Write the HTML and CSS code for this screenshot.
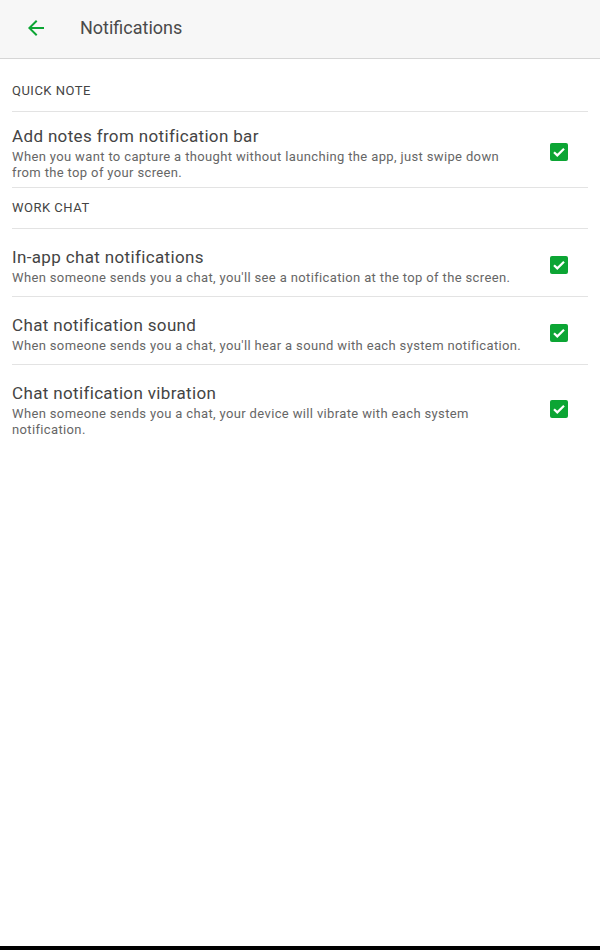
FILE: index.html
```html
<!DOCTYPE html>
<html lang="en">
<head>
<meta charset="utf-8">
<title>Notifications</title>
<link rel="stylesheet" href="styles.css">
</head>
<body>
<div class="screen">
  <header class="appbar">
    <button class="back" aria-label="Back">
      <svg viewBox="0 0 24 24" width="24" height="24"><path d="M20 11H7.83l5.59-5.59L12 4l-8 8 8 8 1.41-1.41L7.83 13H20v-2z" fill="#0ca534"/></svg>
    </button>
    <h1 class="appbar-title">Notifications</h1>
  </header>

  <main class="settings">
    <section class="group">
      <h2 class="group-title">QUICK NOTE</h2>
      <ul class="prefs">
        <li class="pref pref--first">
          <div class="pref-text">
            <div class="pref-title">Add notes from notification bar</div>
            <div class="pref-desc">When you want to capture a thought without launching the app, just swipe down from the top of your screen.</div>
          </div>
          <span class="check"><svg viewBox="0 0 18 18" width="18" height="18"><path d="M4 9.2l3.3 3.2L14 5.8" fill="none" stroke="#fff" stroke-width="2.2"/></svg></span>
        </li>
      </ul>
    </section>

    <section class="group">
      <h2 class="group-title">WORK CHAT</h2>
      <ul class="prefs">
        <li class="pref">
          <div class="pref-text">
            <div class="pref-title">In-app chat notifications</div>
            <div class="pref-desc">When someone sends you a chat, you'll see a notification at the top of the screen.</div>
          </div>
          <span class="check"><svg viewBox="0 0 18 18" width="18" height="18"><path d="M4 9.2l3.3 3.2L14 5.8" fill="none" stroke="#fff" stroke-width="2.2"/></svg></span>
        </li>
        <li class="pref">
          <div class="pref-text">
            <div class="pref-title">Chat notification sound</div>
            <div class="pref-desc">When someone sends you a chat, you'll hear a sound with each system notification.</div>
          </div>
          <span class="check"><svg viewBox="0 0 18 18" width="18" height="18"><path d="M4 9.2l3.3 3.2L14 5.8" fill="none" stroke="#fff" stroke-width="2.2"/></svg></span>
        </li>
        <li class="pref pref--last">
          <div class="pref-text">
            <div class="pref-title">Chat notification vibration</div>
            <div class="pref-desc">When someone sends you a chat, your device will vibrate with each system notification.</div>
          </div>
          <span class="check"><svg viewBox="0 0 18 18" width="18" height="18"><path d="M4 9.2l3.3 3.2L14 5.8" fill="none" stroke="#fff" stroke-width="2.2"/></svg></span>
        </li>
      </ul>
    </section>
  </main>

  <div class="navbar"></div>
</div>
</body>
</html>
```

FILE: styles.css
```css
* { box-sizing: border-box; }

html, body {
  margin: 0;
  padding: 0;
  background: #fff;
}

body {
  font-family: Roboto, "Noto Sans", Arial, sans-serif;
  color: #4a4a4a;
}

.screen {
  display: flex;
  flex-direction: column;
  height: 950px;
}

.appbar {
  display: flex;
  align-items: center;
  height: 59px;
  padding-bottom: 3px;
  background: #f7f7f7;
  border-bottom: 1px solid #d6d6d6;
  flex: none;
}

.back {
  display: flex;
  align-items: center;
  justify-content: center;
  width: 24px;
  height: 24px;
  margin-left: 24px;
  padding: 0;
  border: 0;
  background: none;
}

.back svg { display: block; }

.appbar-title {
  margin: 0 0 0 32px;
  font-size: 18px;
  font-weight: 400;
  color: #4a4a4a;
  line-height: 24px;
}

.settings {
  flex: 1;
  padding: 12px 12px 0;
}

.group-title {
  margin: 0;
  padding: 12px 0 12px;
  font-size: 13px;
  line-height: 16px;
  letter-spacing: 0.5px;
  font-weight: 400;
  color: #444;
  border-bottom: 1px solid #e3e3e3;
}

.prefs {
  list-style: none;
  margin: 0;
  padding: 0;
}

.pref {
  display: flex;
  align-items: center;
  gap: 24px;
  border-bottom: 1px solid #e3e3e3;
}

.pref--last {
  border-bottom: 0;
}

.pref-text {
  flex: 1;
  min-width: 0;
  padding: 18px 0 10px;
}

.pref--first .pref-text {
  padding: 14px 0 6px;
}

.pref-title {
  font-size: 17px;
  line-height: 20px;
  letter-spacing: 0.35px;
  color: #444;
  margin-bottom: 3px;
}

.pref-desc {
  font-size: 13px;
  line-height: 16px;
  letter-spacing: 0.36px;
  color: #666;
}

.check {
  flex: none;
  width: 18px;
  height: 18px;
  margin: 4px 20px 0 0;
  background: #0ca534;
  border-radius: 2px;
}

.check svg { display: block; }

.navbar {
  flex: none;
  height: 4px;
  background: #000;
}
```
